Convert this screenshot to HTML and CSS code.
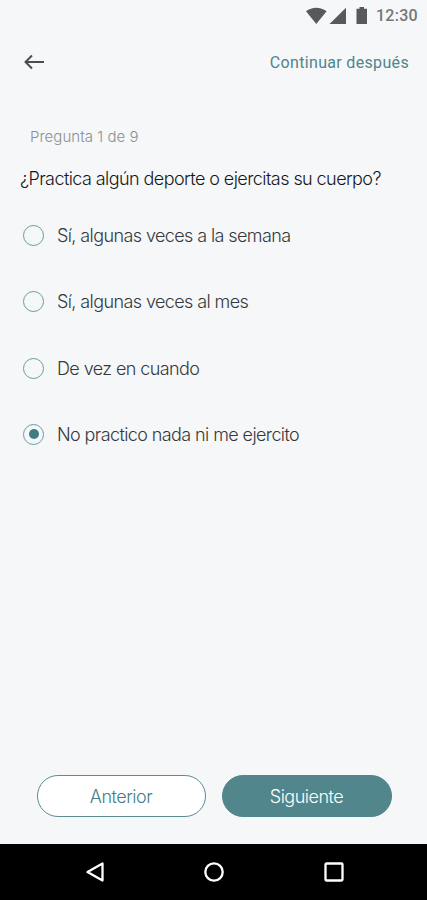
FILE: index.html
```html
<!DOCTYPE html>
<html lang="es">
<head>
<meta charset="utf-8">
<title>Cuestionario</title>
<link rel="stylesheet" href="styles.css">
</head>
<body>
<div class="screen">
  <header class="status">
    <svg class="status-icons" width="64" height="18" viewBox="0 0 64 18" aria-hidden="true">
      <path d="M1 4.200C7 -.5 15.600 -.5 21.600 4.200L11.300 17Z"/>
      <path d="M24.500 17L41 .8V17Z"/>
      <path d="M51.500 1.800H54.500V0H59V1.800H62V17H51.500Z"/>
    </svg>
    <span class="time">12:30</span>
  </header>
  <nav class="topbar">
    <svg class="back" width="22" height="18" viewBox="0 0 22 18" aria-label="Volver"><path d="M21 9H2.500M9 2.500L2.500 9L9 15.500"/></svg>
    <a class="later">Continuar después</a>
  </nav>
  <main class="content">
    <p class="step">Pregunta 1 de 9</p>
    <h1 class="question">¿Practica algún deporte o ejercitas su cuerpo?</h1>
    <div class="options">
      <label class="option"><i class="radio"></i><span>Sí, algunas veces a la semana</span></label>
      <label class="option"><i class="radio"></i><span>Sí, algunas veces al mes</span></label>
      <label class="option"><i class="radio"></i><span>De vez en cuando</span></label>
      <label class="option"><i class="radio checked"></i><span>No practico nada ni me ejercito</span></label>
    </div>
  </main>
  <div class="actions">
    <button class="btn prev">Anterior</button>
    <button class="btn next">Siguiente</button>
  </div>
  <footer class="system">
    <svg width="20" height="22" viewBox="0 0 20 22"><path d="M17.500 2.500V19.500L2.500 11Z"/></svg>
    <svg width="22" height="22" viewBox="0 0 22 22"><circle cx="11" cy="11" r="8.700"/></svg>
    <svg width="22" height="22" viewBox="0 0 22 22"><rect x="2.500" y="2.500" width="17" height="17" rx="1"/></svg>
  </footer>
</div>
</body>
</html>
```
FILE: styles.css
```css
* { box-sizing: border-box; }
body { margin: 0; }
.screen {
  width: 427px;
  height: 900px;
  display: flex;
  flex-direction: column;
  background: #f5f7f9;
  font-family: Inter, "Liberation Sans", sans-serif;
  white-space: nowrap;
  overflow: hidden;
}
.status {
  height: 32px;
  padding: 0 9px 0 0;
  display: flex;
  justify-content: flex-end;
  align-items: center;
  gap: 7px;
}
.status-icons { fill: #58595b; }
.time {
  font: 500 16px/20px Roboto, sans-serif;
  letter-spacing: 0.3px;
  color: #747679;
}
.topbar {
  height: 60px;
  padding: 0 18px 0 23px;
  display: flex;
  justify-content: space-between;
  align-items: center;
}
.back { fill: none; stroke: #4b4d4f; stroke-width: 2; }
.later {
  font: 400 16px/22px Roboto, sans-serif;
  letter-spacing: 0.33px;
  padding-top: 1px;
  color: #4f858b;
}
.content { flex: 1; padding: 34px 20px 0; }
.step {
  margin: 0 0 0 10px;
  font-size: 15px;
  font-weight: 300;
  line-height: 22px;
  letter-spacing: 0.03px;
  color: #8c9092;
}
.question {
  margin: 19px 0 0;
  font-size: 18px;
  font-weight: 300;
  line-height: 24px;
  letter-spacing: -0.57px;
  color: #15181a;
}
.options { margin-top: 33.500px; display: grid; gap: 44.300px; }
.option {
  height: 22px;
  display: flex;
  align-items: center;
  gap: 13px;
  padding-left: 3px;
  font-size: 18px;
  font-weight: 300;
  letter-spacing: -0.6px;
  color: #36393b;
}
.radio {
  width: 21px;
  height: 21px;
  border: 1.300px solid #6b9b9e;
  border-radius: 50%;
  display: grid;
  place-items: center;
}
.checked::after {
  content: "";
  width: 10px;
  height: 10px;
  border-radius: 50%;
  background: #3f7d84;
}
.actions {
  padding: 0 35px 27px 37px;
  display: grid;
  grid-template-columns: 169px 170px;
  justify-content: space-between;
}
.btn {
  height: 42px;
  padding: 2px 1px 0 0;
  border: 1px solid #5c8d91;
  border-radius: 21px;
  font: 300 18px/24px Inter, sans-serif;
  letter-spacing: -0.5px;
}
.prev { background: #fff; color: #477d83; }
.next { background: #50868c; border-color: #50868c; color: #fff; }
.system {
  height: 56px;
  padding: 0 82px 0 85px;
  display: flex;
  justify-content: space-between;
  align-items: center;
  background: #000;
}
.system svg { fill: none; stroke: #fff; stroke-width: 2.300; stroke-linejoin: round; }
```
